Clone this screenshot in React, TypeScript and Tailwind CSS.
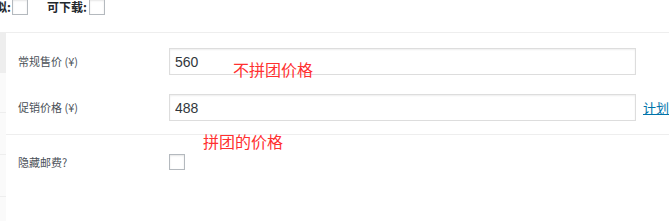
const cjk = { fontFamily: '"Noto Sans CJK SC", "Liberation Sans", sans-serif' };

function Box({ className = '' }: { className?: string }) {
  return (
    <span
      className={`inline-block w-[16px] h-[16px] border border-[#b4b9be] bg-white shadow-[inset_0_1px_2px_rgba(0,0,0,0.1)] ${className}`}
    />
  );
}

function PriceRow({ label, value, link }: { label: string; value: string; link?: string }) {
  return (
    <div className="flex items-center h-[27px]">
      <label className="w-[163px] pl-[12px] text-[11px] text-[#4a5057]" style={cjk}>
        {label}
      </label>
      <input
        readOnly
        value={value}
        className="w-[467px] h-[27px] border border-[#ddd] bg-white px-[5px] text-[14px] text-[#32373c] shadow-[inset_0_1px_2px_rgba(0,0,0,0.07)] outline-none"
        style={{ fontFamily: '"Liberation Sans", sans-serif' }}
      />
      {link && (
        <a href="#" className="ml-[7px] text-[13px] text-[#0073aa] underline whitespace-nowrap" style={cjk}>
          {link}
        </a>
      )}
    </div>
  );
}

export default function App() {
  return (
    <div className="relative w-[669px] h-[221px] overflow-hidden bg-white" style={cjk}>
      {/* product type options */}
      <div className="flow-root h-[32px]">
        <div className="flex items-start -mt-[2px] text-[12px] font-bold text-[#23282d]">
          <label className="flex items-center gap-[1px] -ml-[17px]">
            虚拟:<Box />
          </label>
          <label className="flex items-center gap-[2px] ml-[19px]">
            可下载:<Box />
          </label>
        </div>
      </div>

      <div className="flex h-[189px]">
        {/* tabs column */}
        <ul className="w-[7px] bg-[#fafafa]">
          <li className="h-[41px] bg-[#eee]" />
          <li className="h-[40px] border-b border-[#eee]" />
          <li className="h-[42px] border-b border-[#eee]" />
          <li className="h-[42px] border-b border-[#eee]" />
        </ul>

        {/* general panel */}
        <div className="flex-1 border-t border-[#eee]">
          <div className="flex flex-col gap-[19px] pt-[15px] pb-[13px] border-b border-[#eee]">
            <PriceRow label="常规售价 (¥)" value="560" />
            <PriceRow label="促销价格 (¥)" value="488" link="计划" />
          </div>
          <div className="flex items-center pt-[19px]">
            <label className="w-[163px] pl-[12px] text-[11px] text-[#4a5057]">隐藏邮费?</label>
            <Box />
          </div>
        </div>
      </div>

      {/* hand-written notes */}
      <span className="absolute left-[233px] top-[59px] text-[16px] leading-[20px] text-[#ff3030]">不拼团价格</span>
      <span className="absolute left-[203px] top-[131px] text-[16px] leading-[20px] text-[#ff3030]">拼团的价格</span>
    </div>
  );
}
